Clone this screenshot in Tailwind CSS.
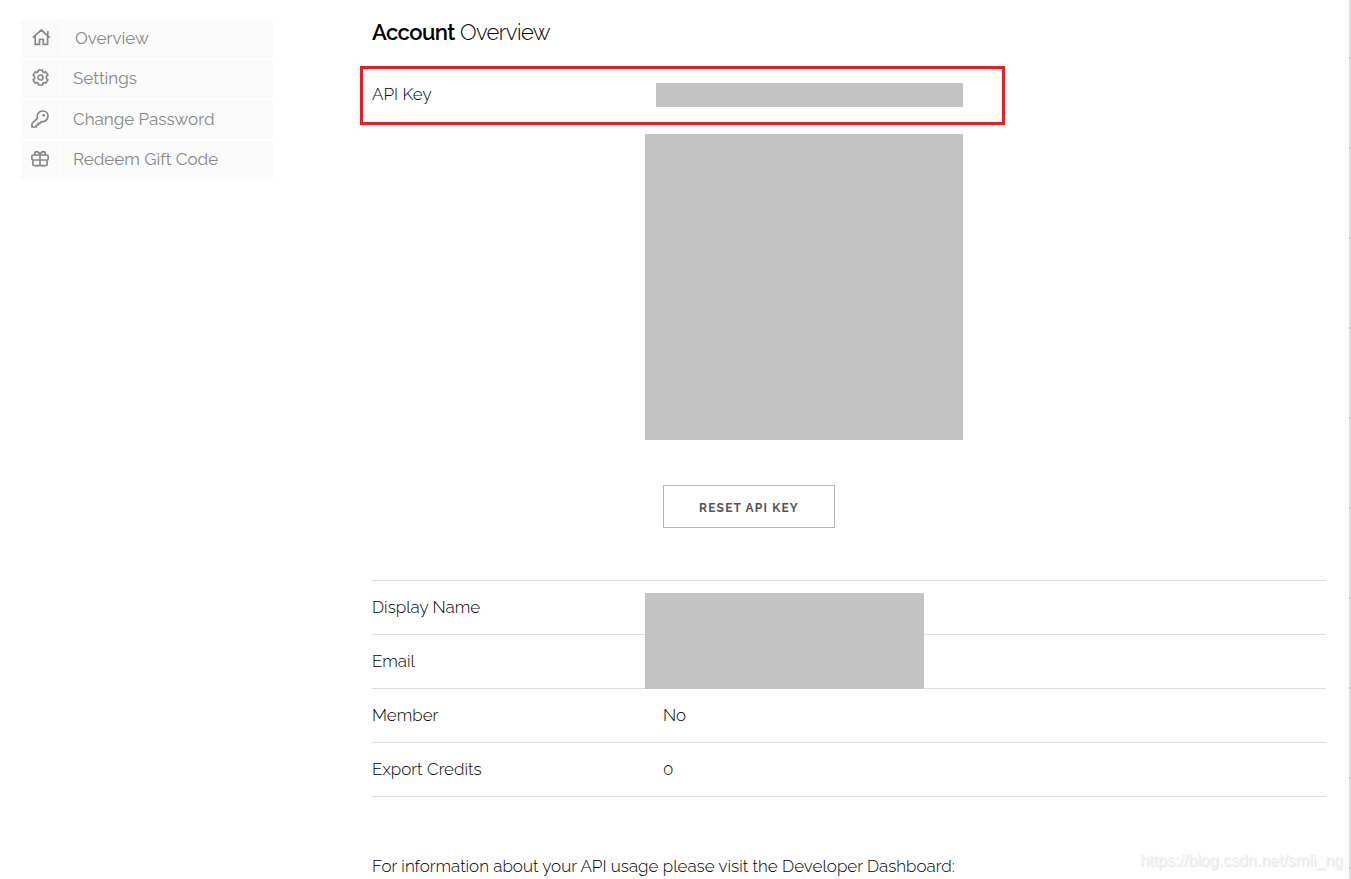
<!DOCTYPE html>
<html lang="en">
<head>
  <meta charset="UTF-8">
  <meta name="viewport" content="width=device-width, initial-scale=1.0">
  <title>Account Overview</title>
  <script src="https://cdn.jsdelivr.net/npm/@tailwindcss/browser@4"></script>
</head>
<body class="relative min-h-screen overflow-x-hidden bg-[#fefefe] font-[Raleway,Lato,sans-serif] text-[17px] leading-6 font-light text-black">
<div class="flex items-start gap-[99px] pl-[21px] pr-[25px]">
  <!-- side menu -->
  <nav class="w-[252px] shrink-0 pt-[19px] font-normal text-[#888]">
    <ul class="flex h-40 flex-col gap-[2px]">
      <li class="flex-1 bg-[#fafafa]">
        <a href="#" class="flex h-full items-center pb-px">
          <span class="flex h-8 w-[42px] items-center border-r border-white pl-[11px]">
            <svg class="size-[19px]" viewBox="0 0 19 19" fill="none" stroke="currentColor" stroke-width="1.7" stroke-linejoin="round"><path d="M.8 9.6 9.3 2l8.5 7.6M3.2 8v8.4h4.3v-5h3.8v5h4.300V8M15.800 8V3"/></svg>
          </span>
          <span class="pl-3">Overview</span>
        </a>
      </li>
      <li class="flex-1 bg-[#fafafa]">
        <a href="#" class="flex h-full items-center pb-[2px]">
          <span class="flex h-8 w-10 items-center border-r border-white pl-[11px]">
            <svg class="size-[17px]" viewBox="0 0 17 17" fill="none" stroke="currentColor" stroke-width="1.7" stroke-linejoin="round"><path d="M6.500 1h4l.3 1.800 1.200.7 1.900-.6 2 3.200-1.500 1.400v2l1.500 1.400-2 3.200-1.900-.6-1.200.7-.3 1.800h-4l-.3-1.800-1.200-.7-1.900.6-2-3.200 1.500-1.400v-2L1.100 6.100l2-3.200 1.900.6 1.200-.7z"/><circle cx="8.500" cy="8.500" r="2.500"/></svg>
          </span>
          <span class="pl-3">Settings</span>
        </a>
      </li>
      <li class="flex-1 bg-[#fafafa]">
        <a href="#" class="flex h-full items-center pb-px">
          <span class="flex h-8 w-10 items-center border-r border-white pl-[10px]">
            <svg class="size-[18px]" viewBox="0 0 18 18" fill="none" stroke="currentColor" stroke-width="1.7" stroke-linejoin="round"><path d="M6.300 8.300C5.400 4.300 8 1 11.600 1c3.100 0 5.400 2.200 5.400 5.200 0 3.700-3.100 6-6.700 5.500l-1.500 1.600H7.200V15H5.400v2H1v-3.500z"/><circle cx="12.700" cy="5.300" r="1.300" fill="currentColor" stroke="none"/></svg>
          </span>
          <span class="pl-3">Change Password</span>
        </a>
      </li>
      <li class="flex-1 bg-[#fafafa]">
        <a href="#" class="flex h-full items-center pb-px">
          <span class="flex h-8 w-10 items-center border-r border-white pl-[10px]">
            <svg class="size-[18px]" viewBox="0 0 18 18" fill="none" stroke="currentColor" stroke-width="1.7" stroke-linejoin="round"><rect x=".9" y="5" width="16.200" height="5" rx="1"/><path d="M2 10v4.600q0 1 1 1h12q1 0 1-1V10M9 5v10.600M9 5C8 .8 3.600.8 3.600 3.400 3.600 4.200 4 5 4.600 5M9 5c1-4.200 5.400-4.200 5.400-1.600 0 .8-.4 1.600-1 1.600"/></svg>
          </span>
          <span class="pl-3">Redeem Gift Code</span>
        </a>
      </li>
    </ul>
  </nav>

  <!-- account details -->
  <main class="min-w-0 flex-1 pt-4">
    <h1 class="text-[22px] leading-8 tracking-tight"><span class="font-semibold">Account</span> Overview</h1>

    <div class="mt-[18px] -ml-3 flex h-[59px] max-w-[645px] items-start border-3 border-[#ed1c24] pr-[39px] pl-[9px]">
      <span class="w-[284px] pt-[13px]">API Key</span>
      <div class="mt-[14px] h-6 flex-1 bg-[#c3c3c3]"></div>
    </div>
    <div class="mt-[9px] ml-[273px] h-[306px] w-[318px] bg-[#c3c3c3]"></div>
    <button type="button" class="mt-[45px] ml-[291px] block h-[43px] w-[172px] border border-[#b5b5b5] pt-[2px] text-xs font-bold tracking-widest text-[#555]">RESET API KEY</button>

    <div class="relative mt-[52px]">
      <table class="w-full border-t border-[#dfdfdf] text-left">
        <tbody>
          <tr class="h-[54px] border-b border-[#dfdfdf]"><th scope="row" class="w-[291px] pb-[2px] font-light">Display Name</th><td class="pb-[2px]"></td></tr>
          <tr class="h-[54px] border-b border-[#dfdfdf]"><th scope="row" class="pb-[2px] font-light">Email</th><td class="pb-[2px]"></td></tr>
          <tr class="h-[54px] border-b border-[#dfdfdf]"><th scope="row" class="pb-[2px] font-light">Member</th><td class="pb-[2px]">No</td></tr>
          <tr class="h-[54px] border-b border-[#dfdfdf]"><th scope="row" class="pb-[2px] font-light">Export Credits</th><td class="pb-[2px]">0</td></tr>
        </tbody>
      </table>
      <!-- hides the name and email values -->
      <div class="absolute top-[13px] left-[273px] h-24 w-[279px] bg-[#c3c3c3]"></div>
    </div>

    <p class="mt-[57px]">For information about your API usage please visit the Developer Dashboard:</p>
  </main>
</div>

<!-- edge of the next panel -->
<div class="absolute inset-y-0 right-0 flex w-[2px] flex-col overflow-hidden bg-[#dedede] pt-[57px]">
  <div class="h-[90px] shrink-0 border-t-2 border-[#c4c4c4]"></div>
  <div class="h-[90px] shrink-0 border-t-2 border-[#c4c4c4]"></div>
  <div class="h-[90px] shrink-0 border-t-2 border-[#c4c4c4]"></div>
  <div class="h-[90px] shrink-0 border-t-2 border-[#c4c4c4]"></div>
  <div class="h-[90px] shrink-0 border-t-2 border-[#c4c4c4]"></div>
  <div class="h-[90px] shrink-0 border-t-2 border-[#c4c4c4]"></div>
  <div class="h-[90px] shrink-0 border-t-2 border-[#c4c4c4]"></div>
  <div class="h-[90px] shrink-0 border-t-2 border-[#c4c4c4]"></div>
  <div class="h-[90px] shrink-0 border-t-2 border-[#c4c4c4]"></div>
  <div class="h-[90px] shrink-0 border-t-2 border-[#c4c4c4]"></div>
</div>
<span class="absolute right-2 bottom-1.5 font-['Liberation_Sans',sans-serif] text-base font-normal text-[#f4f4f4] [text-shadow:1px_1px_1px_#e2e2e2]">https://blog.csdn.net/smli_ng</span>
</body>
</html>
